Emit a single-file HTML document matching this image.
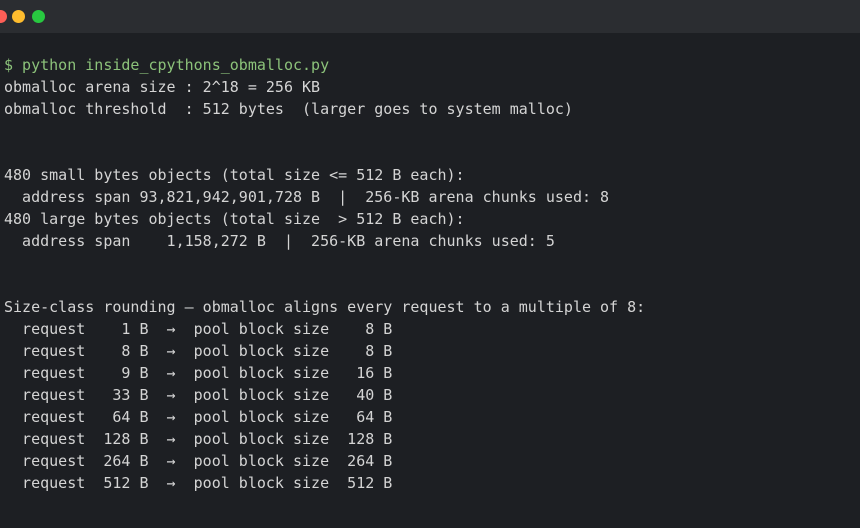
<!DOCTYPE html>
<html><head><meta charset="utf-8"><style>
html,body{margin:0;padding:0;width:860px;height:528px;overflow:hidden;background:#1d1f23;}
.bar{height:33px;background:#2b2d31;position:relative;}
.d{position:absolute;top:10px;width:13px;height:13px;border-radius:50%;}
pre{margin:0;position:absolute;left:4px;top:54px;font-family:"DejaVu Sans Mono","Liberation Mono",monospace;font-size:15px;line-height:22px;color:#d4d4d4;}
.g{color:#8cc27a;}
</style></head><body>
<div class="bar">
<div class="d" style="left:-6px;background:#fe5f57"></div>
<div class="d" style="left:12px;background:#febc2e"></div>
<div class="d" style="left:32px;background:#28c840"></div>
</div>
<pre><span class="g">$ python inside_cpythons_obmalloc.py</span>
obmalloc arena size : 2^18 = 256 KB
obmalloc threshold  : 512 bytes  (larger goes to system malloc)


480 small bytes objects (total size &lt;= 512 B each):
  address span 93,821,942,901,728 B  |  256-KB arena chunks used: 8
480 large bytes objects (total size  &gt; 512 B each):
  address span    1,158,272 B  |  256-KB arena chunks used: 5


Size-class rounding — obmalloc aligns every request to a multiple of 8:
  request    1 B  →  pool block size    8 B
  request    8 B  →  pool block size    8 B
  request    9 B  →  pool block size   16 B
  request   33 B  →  pool block size   40 B
  request   64 B  →  pool block size   64 B
  request  128 B  →  pool block size  128 B
  request  264 B  →  pool block size  264 B
  request  512 B  →  pool block size  512 B</pre>
</body></html>
